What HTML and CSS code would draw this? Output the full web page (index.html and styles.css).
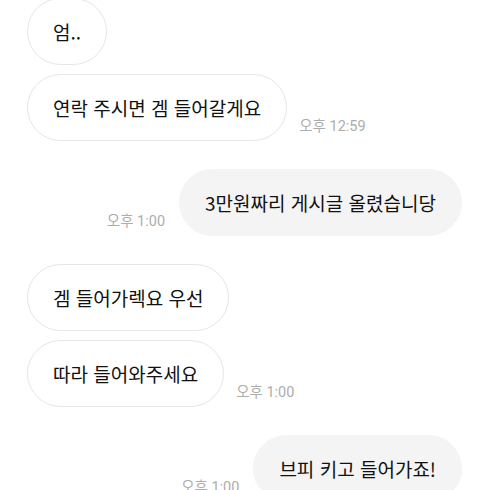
FILE: index.html
```html
<!DOCTYPE html>
<html lang="ko">
<head>
  <meta charset="UTF-8" />
  <meta name="viewport" content="width=device-width, initial-scale=1.0"/>
  <title>채팅</title>
  <link rel="stylesheet" href="styles.css">
</head>
<body>
  <div class="chat">
    <div class="group">
      <div class="row in">
        <div class="bubble">엄..</div>
      </div>
      <div class="row in">
        <div class="bubble">연락 주시면 겜 들어갈게요</div>
        <span class="time">오후 12:59</span>
      </div>
    </div>

    <div class="group">
      <div class="row out">
        <span class="time">오후 1:00</span>
        <div class="bubble">3만원짜리 게시글 올렸습니당</div>
      </div>
    </div>

    <div class="group">
      <div class="row in">
        <div class="bubble">겜 들어가렉요 우선</div>
      </div>
      <div class="row in">
        <div class="bubble">따라 들어와주세요</div>
        <span class="time">오후 1:00</span>
      </div>
    </div>

    <div class="group">
      <div class="row out">
        <span class="time">오후 1:00</span>
        <div class="bubble">브피 키고 들어가죠!</div>
      </div>
    </div>
  </div>
</body>
</html>
```

FILE: styles.css
```css
body {
  margin: 0;
  background-color: #fff;
  font-family: "Noto Sans CJK KR", "Noto Sans", sans-serif;
  color: #111;
  overflow: hidden;
}

.chat {
  display: flex;
  flex-direction: column;
  gap: 28px;
  margin-top: -2px;
  padding: 0 28px 0 27px;
}

.group {
  display: flex;
  flex-direction: column;
  gap: 9px;
}

.row {
  display: flex;
  align-items: flex-end;
  gap: 12px;
}

.row.out {
  justify-content: flex-end;
  gap: 14px;
}

.bubble {
  font-size: 19px;
  line-height: 27px;
  padding: 19px 25px;
  border-radius: 34px;
  border: 1px solid #e6e6e6;
  background-color: #fff;
  white-space: nowrap;
}

.out .bubble {
  background-color: #f4f4f4;
  border-color: #f4f4f4;
}

.time {
  font-family: Roboto, "Noto Sans CJK KR", sans-serif;
  font-size: 14.5px;
  line-height: 16px;
  color: #adadad;
  margin-bottom: 6px;
  white-space: nowrap;
}
```
